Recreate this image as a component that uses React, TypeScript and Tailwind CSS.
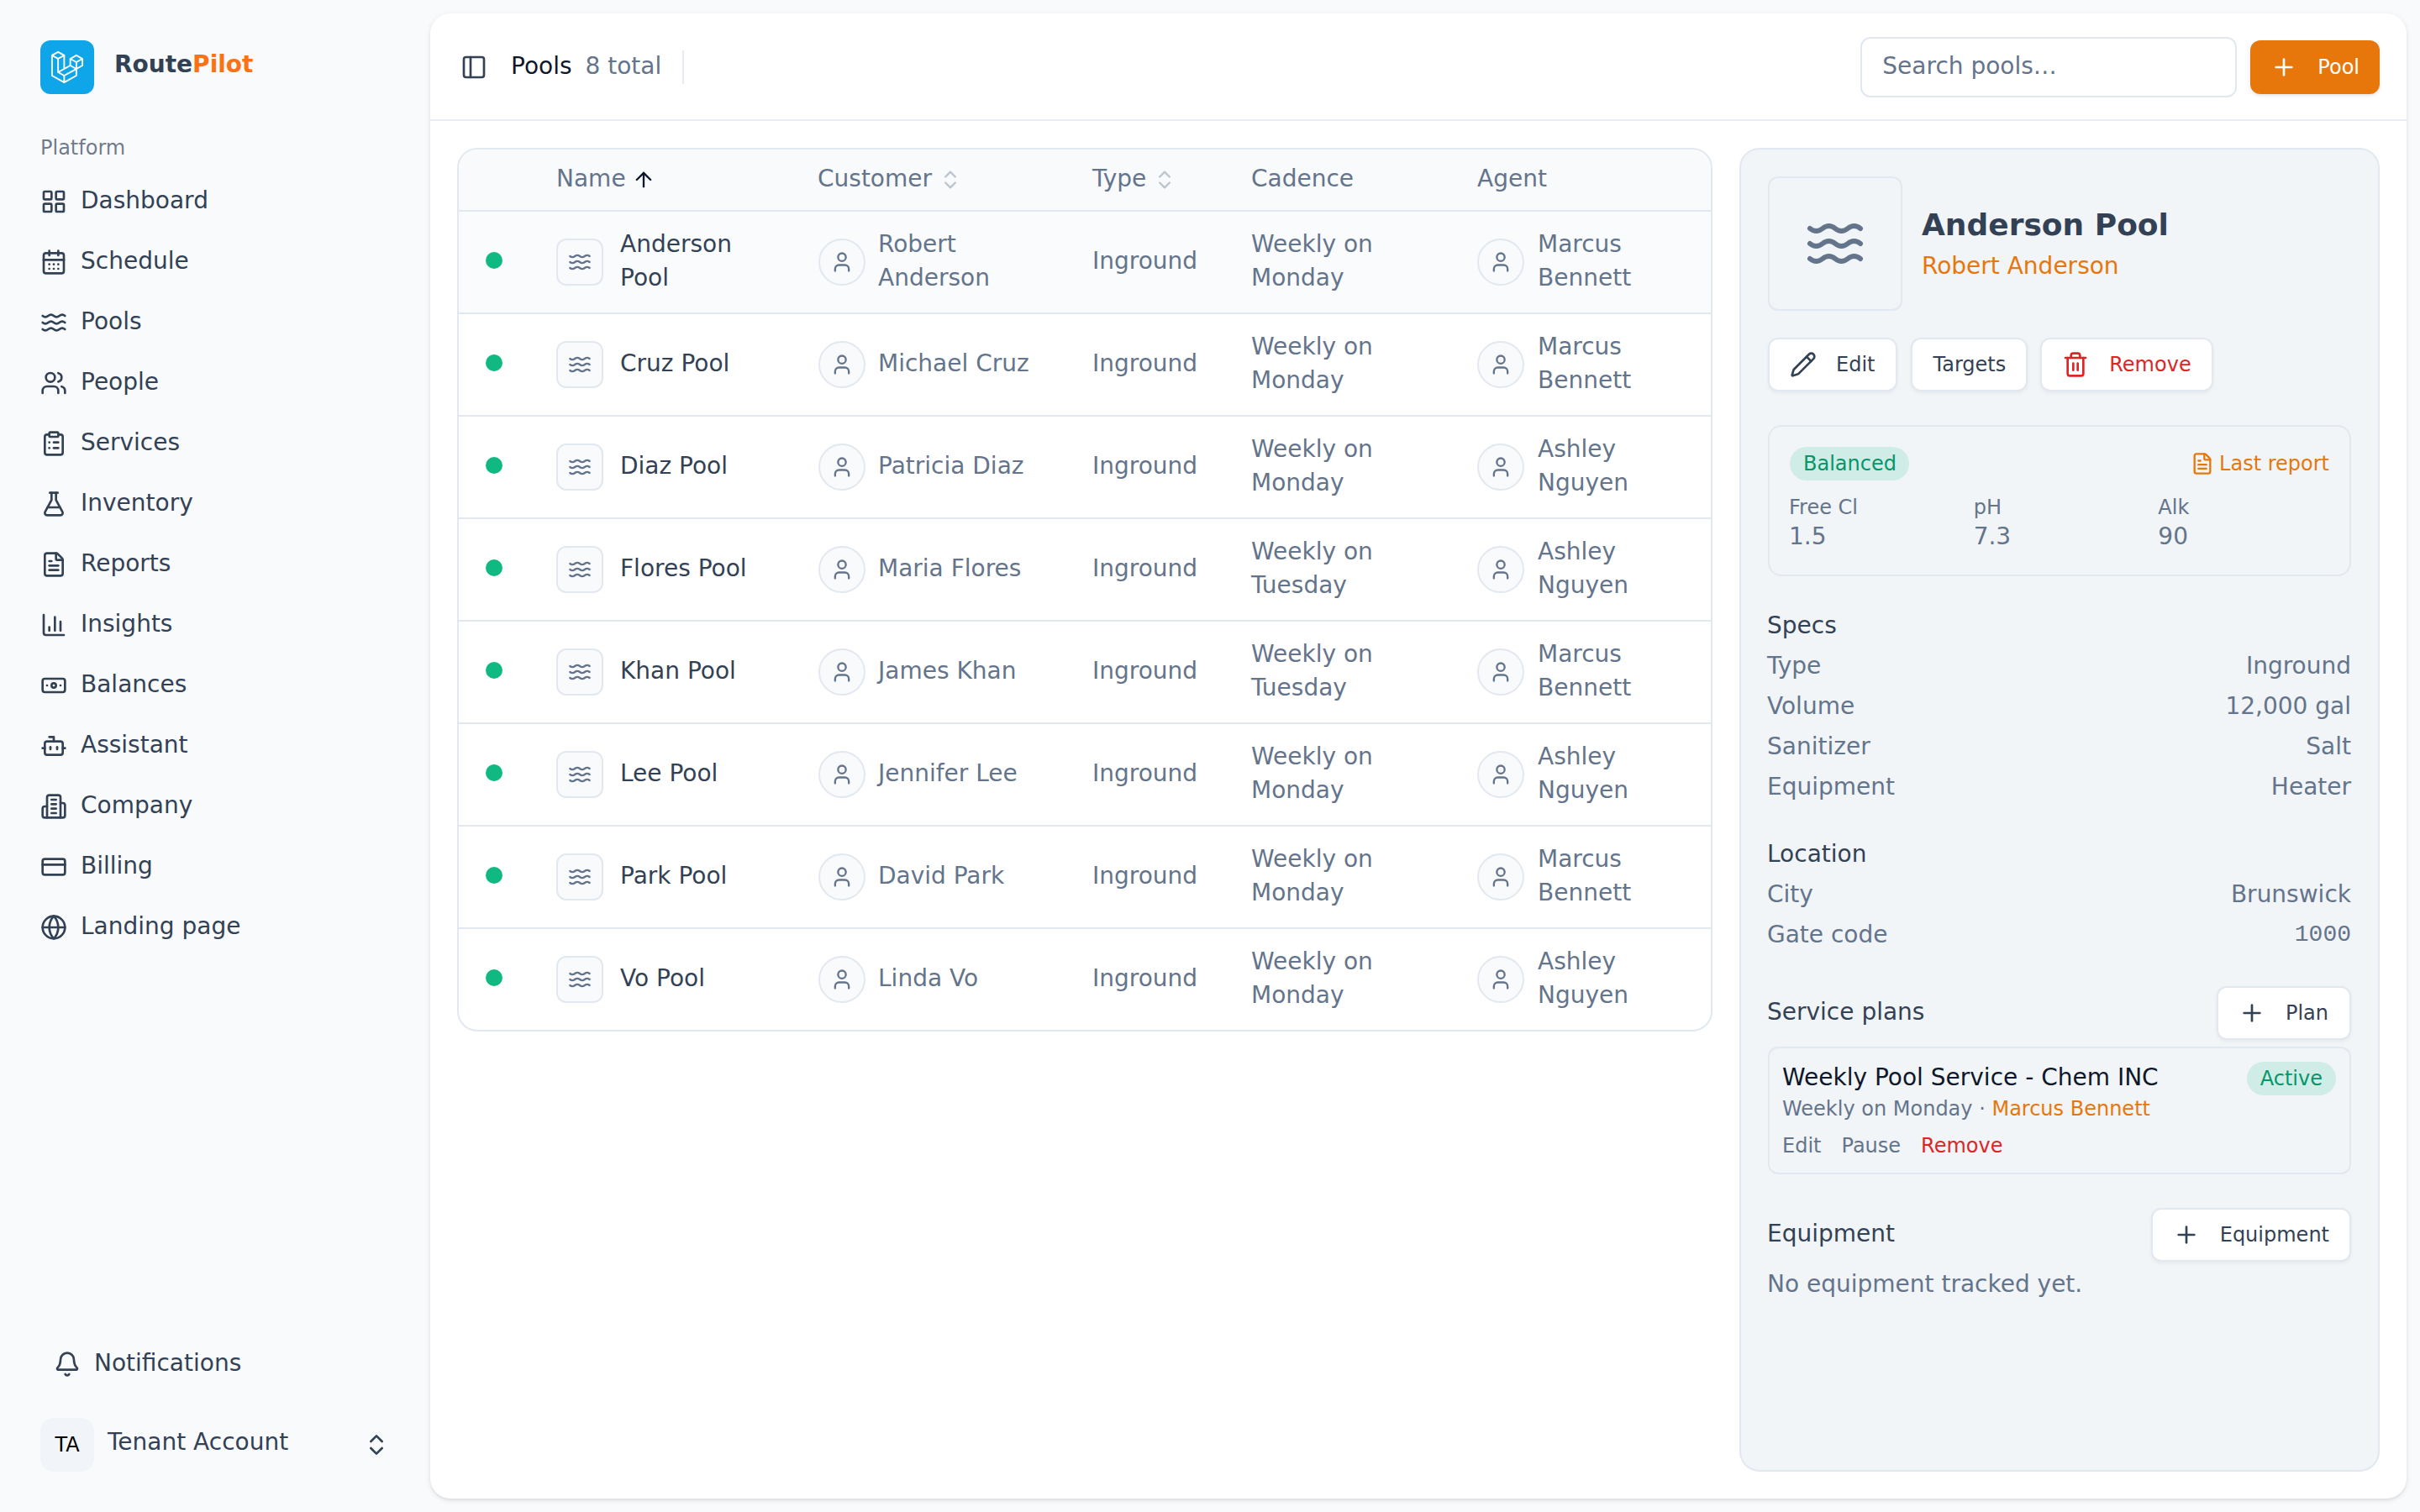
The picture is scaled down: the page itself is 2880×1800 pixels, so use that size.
import React from "react";
import {
  ArrowUp,
  Banknote,
  Bell,
  Bot,
  CalendarDays,
  ChartColumn,
  ChevronsUpDown,
  ClipboardList,
  CreditCard,
  FileText,
  FlaskConical,
  Globe,
  LayoutGrid,
  PanelLeft,
  Pencil,
  Plus,
  Trash2,
  User,
  Users,
  Waves,
} from "lucide-react";

type IconType = React.ComponentType<{ className?: string }>;

function Building({ className }: { className?: string }) {
  return (
    <svg
      viewBox="0 0 24 24"
      fill="none"
      stroke="currentColor"
      strokeWidth={2}
      strokeLinecap="round"
      strokeLinejoin="round"
      className={className}
    >
      <path d="M6 22V4a2 2 0 0 1 2-2h8a2 2 0 0 1 2 2v18Z" />
      <path d="M6 12H4a2 2 0 0 0-2 2v6a2 2 0 0 0 2 2h2" />
      <path d="M18 9h2a2 2 0 0 1 2 2v9a2 2 0 0 1-2 2h-2" />
      <path d="M10 6h4" />
      <path d="M10 10h4" />
      <path d="M10 14h4" />
      <path d="M10 18h4" />
    </svg>
  );
}

const nav: { label: string; icon: IconType }[] = [
  { label: "Dashboard", icon: LayoutGrid },
  { label: "Schedule", icon: CalendarDays },
  { label: "Pools", icon: Waves },
  { label: "People", icon: Users },
  { label: "Services", icon: ClipboardList },
  { label: "Inventory", icon: FlaskConical },
  { label: "Reports", icon: FileText },
  { label: "Insights", icon: ChartColumn },
  { label: "Balances", icon: Banknote },
  { label: "Assistant", icon: Bot },
  { label: "Company", icon: Building },
  { label: "Billing", icon: CreditCard },
  { label: "Landing page", icon: Globe },
];

const pools = [
  { name: "Anderson Pool", customer: "Robert Anderson", cadence: "Weekly on Monday", agent: "Marcus Bennett" },
  { name: "Cruz Pool", customer: "Michael Cruz", cadence: "Weekly on Monday", agent: "Marcus Bennett" },
  { name: "Diaz Pool", customer: "Patricia Diaz", cadence: "Weekly on Monday", agent: "Ashley Nguyen" },
  { name: "Flores Pool", customer: "Maria Flores", cadence: "Weekly on Tuesday", agent: "Ashley Nguyen" },
  { name: "Khan Pool", customer: "James Khan", cadence: "Weekly on Tuesday", agent: "Marcus Bennett" },
  { name: "Lee Pool", customer: "Jennifer Lee", cadence: "Weekly on Monday", agent: "Ashley Nguyen" },
  { name: "Park Pool", customer: "David Park", cadence: "Weekly on Monday", agent: "Marcus Bennett" },
  { name: "Vo Pool", customer: "Linda Vo", cadence: "Weekly on Monday", agent: "Ashley Nguyen" },
];

function Logo({ className }: { className?: string }) {
  return (
    <svg viewBox="0 0 40 42" className={className}>
      <path
        fill="currentColor"
        fillRule="evenodd"
        clipRule="evenodd"
        d="M17.2 5.633 8.6.855 0 5.633v26.51l16.2 9 16.2-9v-8.442l7.6-4.223V9.856l-8.6-4.777-8.6 4.777V18.3l-5.6 3.111V5.633ZM38 18.301l-5.6 3.11v-6.157l5.6-3.11V18.3Zm-1.06-7.856-5.54 3.078-5.54-3.079 5.54-3.078 5.54 3.079ZM24.8 18.3v-6.157l5.6 3.111v6.158L24.8 18.3Zm-1 1.732 5.54 3.078-13.14 7.302-5.54-3.078 13.14-7.3v-.002Zm-16.2 7.89 7.6 4.222V38.3L2 30.966V7.92l5.6 3.111v16.892ZM8.6 9.3 3.06 6.222 8.6 3.143l5.54 3.08L8.6 9.3Zm21.8 15.51-13.2 7.334V38.3l13.2-7.334v-6.156ZM9.6 11.034l5.6-3.11v14.6l-5.6 3.11v-14.6Z"
      />
    </svg>
  );
}

/* 28px body copy on a 40px line, nudged up a pixel to sit optically centred */
function Body({ className = "", children }: { className?: string; children: React.ReactNode }) {
  return <div className={`-mt-px mb-px text-[28px] leading-[40px] ${className}`}>{children}</div>;
}

function Sidebar() {
  return (
    <aside className="flex w-[512px] shrink-0 flex-col justify-between px-12 pt-12 pb-8">
      <div>
        <div className="flex h-16 items-center gap-6">
          <div className="flex size-16 items-center justify-center rounded-[12px] bg-[#0ea5e9] text-white">
            <Logo className="size-10" />
          </div>
          <div className="pb-1.5 text-[28px] leading-[36px] font-bold">
            Route<span className="text-[#f97316]">Pilot</span>
          </div>
        </div>
        <div className="mt-8 flex h-16 items-center text-[24px] text-[#334155]/70">Platform</div>
        <nav className="flex flex-col gap-2">
          {nav.map(({ label, icon: Icon }) => (
            <a key={label} className="flex h-16 items-center gap-4">
              <Icon className="size-8" />
              <Body>{label}</Body>
            </a>
          ))}
        </nav>
      </div>
      <div>
        <div className="flex h-16 items-center gap-4 pl-4">
          <Bell className="size-8" />
          <Body>Notifications</Body>
        </div>
        <div className="mt-4 flex h-24 items-center">
          <div className="flex size-16 items-center justify-center rounded-2xl bg-[#f1f5f9] text-[24px] text-black">TA</div>
          <Body className="ml-4 flex-1 pb-1">Tenant Account</Body>
          <ChevronsUpDown className="size-8" />
        </div>
      </div>
    </aside>
  );
}

function Header() {
  return (
    <header className="flex h-32 shrink-0 items-center border-b-2 border-[#e2e8f0]/80 px-8 pt-0.5">
      <PanelLeft className="ml-1 size-8" />
      <Body className="ml-7 text-[#0f172a]">Pools</Body>
      <Body className="ml-4 text-[#64748b]">8 total</Body>
      <div className="ml-[25px] h-10 w-0.5 bg-[#e2e8f0]/80" />
      <div className="ml-auto flex items-center gap-4">
        <div className="flex h-[72px] w-[448px] items-center rounded-[12px] border-2 border-[#e2e8f0] px-6">
          <Body className="text-[#64748b]">Search pools…</Body>
        </div>
        <button className="flex h-16 items-center gap-6 rounded-[12px] bg-[#e8770b] px-6 text-[24px] text-white shadow-[0_2px_4px_rgba(0,0,0,0.1)]">
          <Plus className="size-8" />
          Pool
        </button>
      </div>
    </header>
  );
}

function Person({ name, className = "gap-4" }: { name: string; className?: string }) {
  return (
    <div className={`flex items-center ${className}`}>
      <div className="flex size-14 shrink-0 items-center justify-center rounded-full border-2 border-[#e2e8f0] bg-[#f8fafc]">
        <User className="size-7" />
      </div>
      <Body>{name}</Body>
    </div>
  );
}

function PoolTable() {
  return (
    <div className="min-w-0 flex-1">
      <div className="overflow-hidden rounded-3xl border-2 border-[#e2e8f0]">
        <table className="w-full table-fixed border-separate border-spacing-0 text-left text-[#64748b]">
          <colgroup>
            <col className="w-[84px]" />
            <col className="w-[312px]" />
            <col className="w-[326px]" />
            <col className="w-[189px]" />
            <col className="w-[269px]" />
            <col />
          </colgroup>
          <thead>
            <tr className="h-[74px] bg-[#f8fafc] *:border-b-2 *:border-[#e2e8f0] *:px-8 *:font-normal">
              <th />
              <th>
                <div className="flex items-center gap-[7px]">
                  <Body>Name</Body>
                  <ArrowUp className="size-7 text-[#0f172a]" />
                </div>
              </th>
              <th>
                <div className="-ml-px flex items-center gap-2">
                  <Body>Customer</Body>
                  <ChevronsUpDown className="size-7 opacity-40" />
                </div>
              </th>
              <th>
                <div className="flex items-center gap-2">
                  <Body>Type</Body>
                  <ChevronsUpDown className="size-7 opacity-40" />
                </div>
              </th>
              <th>
                <Body>Cadence</Body>
              </th>
              <th>
                <Body>Agent</Body>
              </th>
            </tr>
          </thead>
          <tbody>
            {pools.map((p, i) => (
              <tr
                key={p.name}
                className={`h-[122px] *:border-b-2 *:border-[#e2e8f0] *:px-8 last:h-[120px] last:*:border-b-0 ${i === 0 ? "bg-[#f8fafc]/80" : ""}`}
              >
                <td>
                  <div className="mb-1 size-5 rounded-full bg-[#10b981]" />
                </td>
                <td>
                  <div className="flex items-center gap-5 text-[#334155]">
                    <div className="flex size-14 shrink-0 items-center justify-center rounded-[12px] border-2 border-[#e2e8f0] bg-[#f8fafc] text-[#64748b]">
                      <Waves className="size-7" />
                    </div>
                    <Body>{p.name}</Body>
                  </div>
                </td>
                <td>
                  <Person name={p.customer} className="gap-[15px]" />
                </td>
                <td>
                  <Body>Inground</Body>
                </td>
                <td>
                  <Body>{p.cadence}</Body>
                </td>
                <td>
                  <Person name={p.agent} />
                </td>
              </tr>
            ))}
          </tbody>
        </table>
      </div>
    </div>
  );
}

function OutlineButton({
  icon: Icon,
  className = "gap-6 px-6",
  children,
}: {
  icon?: IconType;
  className?: string;
  children: React.ReactNode;
}) {
  return (
    <button
      className={`flex h-16 items-center rounded-[12px] border-2 border-[#e2e8f0] bg-white text-[24px] shadow-[0_2px_4px_rgba(0,0,0,0.05)] ${className}`}
    >
      {Icon && <Icon className="size-8" />}
      {children}
    </button>
  );
}

function Badge({ className = "px-4", children }: { className?: string; children: React.ReactNode }) {
  return (
    <span
      className={`flex h-10 items-center rounded-full bg-[#10b981]/15 text-[24px] leading-[32px] text-[#059669] ${className}`}
    >
      {children}
    </span>
  );
}

function Row({ label, value, mono }: { label: string; value: string; mono?: boolean }) {
  return (
    <div className="flex items-center justify-between">
      <Body className="-ml-px">{label}</Body>
      <Body className={mono ? "font-['Liberation_Mono',monospace]" : ""}>{value}</Body>
    </div>
  );
}

function Reading({ label, value }: { label: string; value: string }) {
  return (
    <div>
      <div className="text-[24px] leading-[32px]">{label}</div>
      <Body>{value}</Body>
    </div>
  );
}

function Details() {
  return (
    <section className="flex w-[762px] shrink-0 flex-col gap-10 rounded-3xl border-2 border-[#e2e8f0] bg-[#f1f5f8] p-8 text-[#64748b]">
      <div className="flex flex-col gap-8">
        <div className="flex items-center gap-[23px]">
          <div className="flex size-40 items-center justify-center rounded-[12px] border-2 border-[#e2e8f0]">
            <Waves className="size-[72px]" />
          </div>
          <div>
            <div className="-mt-0.5 mb-0.5 text-[36px] leading-[56px] font-bold text-[#334155]">Anderson Pool</div>
            <Body className="text-[#e8770b]">Robert Anderson</Body>
          </div>
        </div>
        <div className="flex text-[#334155]">
          <OutlineButton icon={Pencil} className="gap-[23px] pr-[25px] pl-6">
            Edit
          </OutlineButton>
          <OutlineButton className="ml-4 px-6">Targets</OutlineButton>
          <OutlineButton icon={Trash2} className="ml-[15px] gap-6 px-6 text-[#dc2626]">
            Remove
          </OutlineButton>
        </div>
      </div>

      <div className="rounded-2xl border-2 border-[#e2e8f0] p-6">
        <div className="flex items-center justify-between">
          <Badge className="pr-[15px] pl-4">Balanced</Badge>
          <a className="flex items-center gap-1.5 text-[24px] leading-[32px] text-[#e8770b]">
            <FileText className="size-7" />
            Last report
          </a>
        </div>
        <div className="mt-4 -ml-px grid grid-cols-3 gap-4">
          <Reading label="Free Cl" value="1.5" />
          <Reading label="pH" value="7.3" />
          <Reading label="Alk" value="90" />
        </div>
      </div>

      <div className="flex flex-col gap-2">
        <Body className="-ml-px text-[#334155]">Specs</Body>
        <Row label="Type" value="Inground" />
        <Row label="Volume" value="12,000 gal" />
        <Row label="Sanitizer" value="Salt" />
        <Row label="Equipment" value="Heater" />
      </div>

      <div className="flex flex-col gap-2">
        <Body className="-ml-px text-[#334155]">Location</Body>
        <Row label="City" value="Brunswick" />
        <Row label="Gate code" value="1000" mono />
      </div>

      <div className="flex flex-col gap-2">
        <div className="flex items-center justify-between text-[#334155]">
          <Body className="-ml-px">Service plans</Body>
          <OutlineButton icon={Plus} className="gap-6 pr-[25px] pl-6">
            Plan
          </OutlineButton>
        </div>
        <div className="rounded-[12px] border-2 border-[#e2e8f0] py-4 pr-4 pl-[15px]">
          <div className="flex items-start justify-between">
            <div>
              <Body className="text-[#0f172a]">Weekly Pool Service - Chem INC</Body>
              <div className="text-[24px] leading-[32px]">
                Weekly on Monday · <span className="text-[#e8770b]">Marcus Bennett</span>
              </div>
            </div>
            <Badge>Active</Badge>
          </div>
          <div className="mt-3 flex gap-6 text-[24px] leading-[32px]">
            <span>Edit</span>
            <span>Pause</span>
            <span className="text-[#dc2626]">Remove</span>
          </div>
        </div>
      </div>

      <div className="flex flex-col gap-2">
        <div className="flex items-center justify-between text-[#334155]">
          <Body className="-ml-px">Equipment</Body>
          <OutlineButton icon={Plus}>Equipment</OutlineButton>
        </div>
        <Body className="-ml-px">No equipment tracked yet.</Body>
      </div>
    </section>
  );
}

export default function App() {
  return (
    <div className="flex h-[1800px] w-[2880px] overflow-hidden bg-[#f8fafc] font-['DejaVu_Sans',sans-serif] text-[#334155]">
      <Sidebar />
      <main className="my-4 mr-4 flex flex-1 flex-col rounded-3xl bg-white shadow-[0_2px_6px_rgba(0,0,0,0.1),0_2px_4px_-2px_rgba(0,0,0,0.1)]">
        <Header />
        <div className="flex min-h-0 flex-1 gap-8 p-8">
          <PoolTable />
          <Details />
        </div>
      </main>
    </div>
  );
}
